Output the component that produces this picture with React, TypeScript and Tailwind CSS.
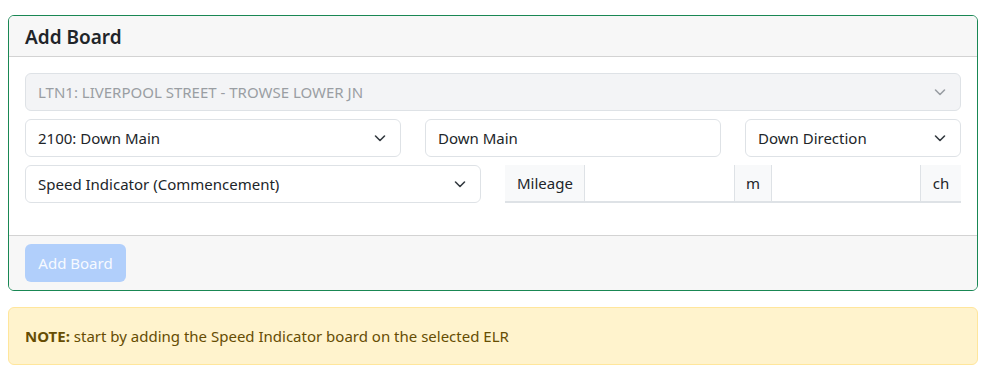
import React from "react";

const Chevron = ({ color = "#343a40" }: { color?: string }) => (
  <svg width="16" height="16" viewBox="0 0 16 16" fill="none">
    <path d="M3.5 6l4.5 4.5 4.5-4.5" stroke={color} strokeWidth="1.6" strokeLinecap="round" strokeLinejoin="round" />
  </svg>
);

const Select = ({ text, className = "", disabled = false }: { text: string; className?: string; disabled?: boolean }) => (
  <div
    className={`h-[38px] flex items-center justify-between pl-3 pr-[12px] rounded-[6px] border border-[#dee2e6] ${
      disabled ? "bg-[#f3f4f6] text-[#9a9ea3]" : "bg-white text-[#212529]"
    } ${className}`}
  >
    <span>{text}</span>
    <Chevron color={disabled ? "#9a9ea3" : "#343a40"} />
  </div>
);

export default function App() {
  return (
    <div className="bg-white w-[987px] h-[379px] pl-2 pr-[9px] pt-[15px] text-[15px] leading-6" style={{ fontFamily: '"Noto Sans", "Open Sans", sans-serif' }}>
      <div className="border border-[#198754] rounded-[6px] overflow-hidden">
        <div className="h-[41px] bg-[#f7f7f7] border-b border-[#d3d3d3] flex items-center px-4">
          <h5 className="text-[19px] font-semibold text-[#212529] pt-[2px]">Add Board</h5>
        </div>
        <div className="bg-white px-4 pt-4 pb-[32px] flex flex-col gap-2">
          <Select text="LTN1: LIVERPOOL STREET - TROWSE LOWER JN" disabled />
          <div className="flex gap-6">
            <Select text="2100: Down Main" className="w-[376px]" />
            <div className="w-[296px] h-[38px] flex items-center px-3 rounded-[6px] border border-[#dee2e6] text-[#212529]">Down Main</div>
            <Select text="Down Direction" className="flex-1" />
          </div>
          <div className="flex gap-6">
            <Select text="Speed Indicator (Commencement)" className="w-[456px]" />
            <div className="flex-1 h-[38px] flex border-b-2 border-[#dee2e6] text-[#212529]">
              <div className="w-[79px] bg-[#f8f9fa] flex items-center px-3">Mileage</div>
              <div className="w-[151px] border-l border-r border-[#dee2e6] bg-white" />
              <div className="w-[36px] bg-[#f8f9fa] flex items-center justify-center">m</div>
              <div className="w-[150px] border-l border-r border-[#dee2e6] bg-white" />
              <div className="flex-1 bg-[#f8f9fa] flex items-center justify-center">ch</div>
            </div>
          </div>
        </div>
        <div className="h-[55px] bg-[#f7f7f7] border-t border-[#d3d3d3] px-4 flex items-center">
          <button className="h-[38px] w-[101px] rounded-[6px] bg-[#b1cffb] text-[#f7faff]">Add Board</button>
        </div>
      </div>
      <div className="mt-4 h-[58px] rounded-[6px] border border-[#ffe69c] bg-[#fff3cd] text-[#664d03] flex items-center px-4">
        <span>
          <b className="font-bold">NOTE:</b> start by adding the Speed Indicator board on the selected ELR
        </span>
      </div>
    </div>
  );
}
